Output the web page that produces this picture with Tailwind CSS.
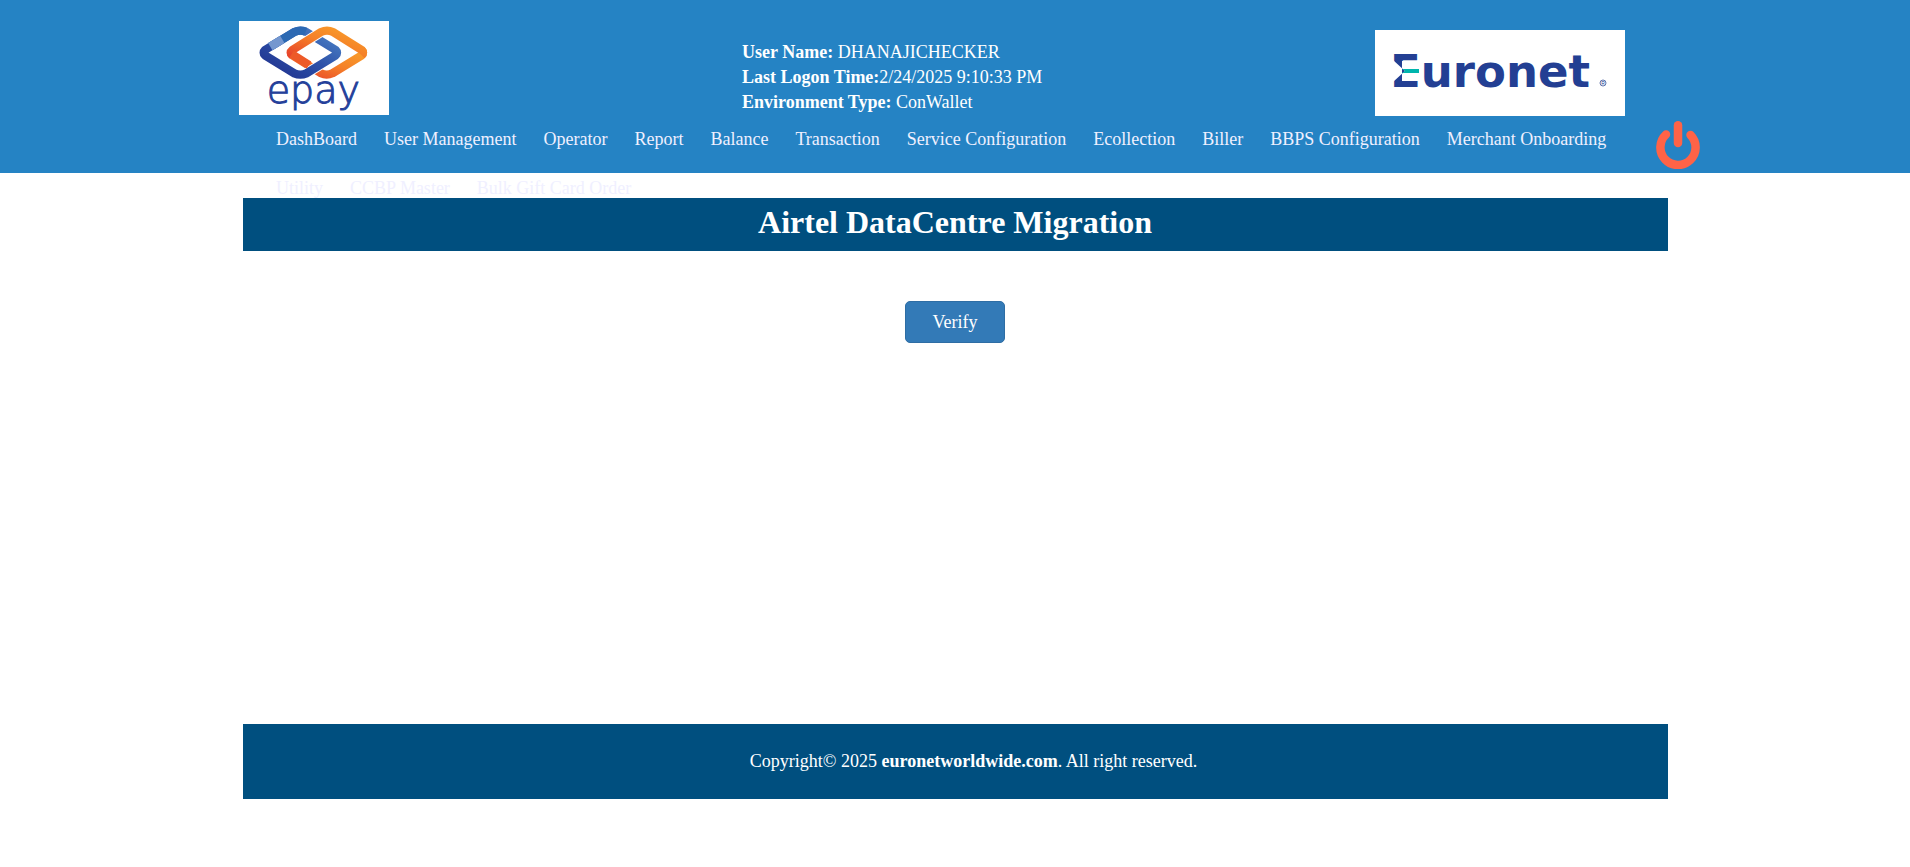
<!DOCTYPE html>
<html lang="en">
<head>
<meta charset="utf-8">
<meta name="viewport" content="width=device-width, initial-scale=1">
<title>Airtel DataCentre Migration</title>
<script src="https://cdn.jsdelivr.net/npm/@tailwindcss/browser@4"></script>
</head>
<body class="bg-white font-['Liberation_Serif','Times_New_Roman',serif] text-[18px] leading-[25px]">
<header class="h-[173px] bg-[#2583c4]">
  <div class="mx-auto max-w-[1490px] pl-[29px] pt-[21px]">
    <div class="grid h-[95px] grid-cols-[503px_1fr_auto] items-start pr-[75px]">
      <svg class="h-[94px] w-[150px] bg-white" viewBox="0 0 450 282" role="img" aria-label="epay">
        <defs>
          <linearGradient id="blue" x1="0" y1="1" x2="1" y2="0"><stop offset="0" stop-color="#20308c"/><stop offset=".5" stop-color="#2c50a8"/><stop offset="1" stop-color="#4f86c8"/></linearGradient>
          <linearGradient id="orange" x1="0" y1="1" x2="1" y2="0"><stop offset="0" stop-color="#e8452a"/><stop offset=".5" stop-color="#f58028"/><stop offset="1" stop-color="#f9a02a"/></linearGradient>
        </defs>
        <g fill="none" stroke-linejoin="round">
          <path d="M158 95Q154 99 160 103L246 157Q263 165 280 157L368 103Q376 95 368 87" stroke="url(#orange)" stroke-width="25"/>
          <path d="M202 33L290 87Q298 95 290 103L202 157Q184 165 166 157L78 103" stroke="#fff" stroke-width="31"/>
          <path d="M166 33L78 87Q70 95 78 103L166 157Q184 165 202 157L290 103Q298 95 290 87L202 33Q184 25 166 33Z" stroke="url(#blue)" stroke-width="25"/>
          <path d="M170 81L246 33Q264 25 282 33" stroke="#fff" stroke-width="31"/>
          <path d="M160 103Q150 95 160 87L246 33Q264 25 282 33L368 87Q376 95 368 103" stroke="url(#orange)" stroke-width="25"/>
          <path d="M158 99L210 132" stroke="#ed5a28" stroke-width="25"/>
          <path d="M94 77L166 33Q184 25 200 32" stroke="#2c69b3" stroke-width="25"/>
          <path d="M94 77L130 55" stroke="#7597cf" stroke-width="25"/>
        </g>
        <text x="223" y="245" text-anchor="middle" font-family="DejaVu Sans" font-weight="200" font-size="114" fill="#24409a" stroke="#24409a" stroke-width="3">epay</text>
      </svg>
      <div class="pt-[19px] text-white">
        <p><b>User Name:</b> DHANAJICHECKER</p>
        <p><b>Last Logon Time:</b>2/24/2025 9:10:33 PM</p>
        <p><b>Environment Type:</b> ConWallet</p>
      </div>
      <svg class="mt-[9px] h-[86px] w-[250px] bg-white" viewBox="0 0 250 86" role="img" aria-label="Euronet">
        <text x="15" y="57" font-family="DejaVu Sans" font-weight="700" font-size="45" fill="#233f93">Euronet</text>
        <path d="M18 30V52L30 41ZM27 31H46V51H27Z" fill="#fff"/>
        <path d="M27 39H44V43H27L30 41Z" fill="#00b5ad"/>
        <circle cx="228" cy="53" r="3" fill="none" stroke="#6175ad"/>
        <text x="228" y="55" text-anchor="middle" font-family="Liberation Sans" font-size="5" fill="#233f93">R</text>
      </svg>
    </div>
    <div class="flex items-start">
      <nav aria-label="Main" class="flex min-w-0 flex-1 flex-wrap gap-x-px pl-[24px] text-[#f0f0ff]">
        <a href="#" class="px-[13px] pt-[11px] pb-[13px]">DashBoard</a>
        <a href="#" class="px-[13px] pt-[11px] pb-[13px]">User Management</a>
        <a href="#" class="px-[13px] pt-[11px] pb-[13px]">Operator</a>
        <a href="#" class="px-[13px] pt-[11px] pb-[13px]">Report</a>
        <a href="#" class="px-[13px] pt-[11px] pb-[13px]">Balance</a>
        <a href="#" class="px-[13px] pt-[11px] pb-[13px]">Transaction</a>
        <a href="#" class="px-[13px] pt-[11px] pb-[13px]">Service Configuration</a>
        <a href="#" class="px-[13px] pt-[11px] pb-[13px]">Ecollection</a>
        <a href="#" class="px-[13px] pt-[11px] pb-[13px]">Biller</a>
        <a href="#" class="px-[13px] pt-[11px] pb-[13px]">BBPS Configuration</a>
        <a href="#" class="px-[13px] pt-[11px] pb-[13px]">Merchant Onboarding</a>
        <a href="#" class="px-[13px] pt-[11px] pb-[13px]">Utility</a>
        <a href="#" class="px-[13px] pt-[11px] pb-[13px]">CCBP Master</a>
        <a href="#" class="px-[13px] pt-[11px] pb-[13px]">Bulk Gift Card Order</a>
      </nav>
      <button type="button" aria-label="Log out" class="mt-[5px] cursor-pointer">
        <svg class="h-12 w-11" viewBox="0 0 44 48" fill="none" stroke="#ff6347" stroke-linecap="round"><path d="M10 13.5A17.6 17.6 0 1 0 34.5 14" stroke-width="8.5"/><path d="M22 4.3V22" stroke-width="8.5"/></svg>
      </button>
    </div>
  </div>
</header>
<main class="mx-auto mt-[25px] min-h-[526px] max-w-[1425px]">
  <h1 class="h-[53px] bg-[#004f7f] pt-1 text-center text-[32px] leading-[40px] font-bold text-white">Airtel DataCentre Migration</h1>
  <div class="flex justify-center pt-[50px]">
    <button type="button" class="h-[42px] w-[100px] cursor-pointer rounded-[5px] border border-[#2e6da4] bg-[#337ab7] text-white">Verify</button>
  </div>
</main>
<footer class="mx-auto max-w-[1425px] bg-[#004f7f] py-[25px] pl-[37px] text-center text-white">
  <p>Copyright© 2025 <a href="#" class="font-bold">euronetworldwide.com</a>. All right reserved.</p>
</footer>
</body>
</html>
